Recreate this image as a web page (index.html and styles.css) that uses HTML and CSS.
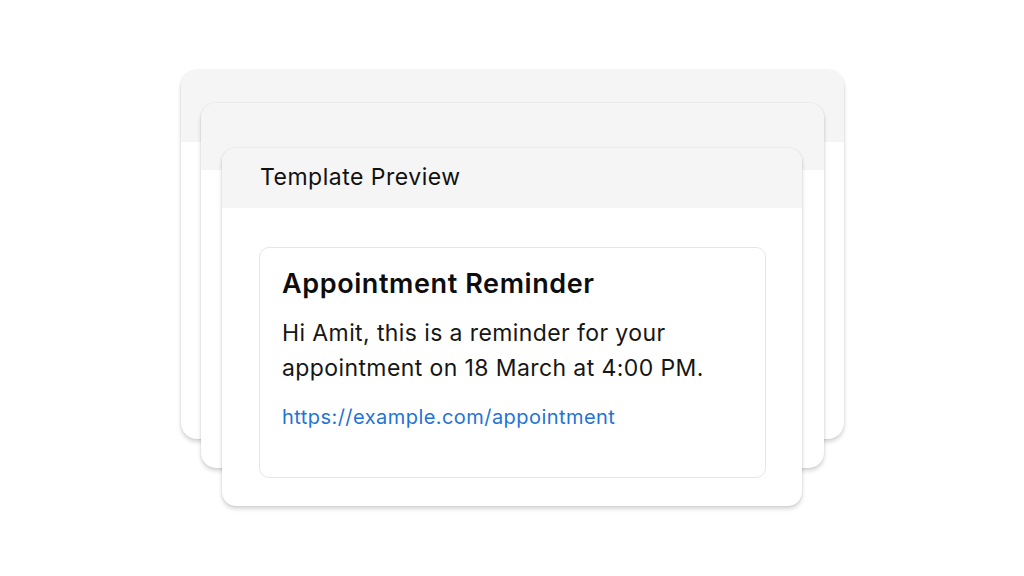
FILE: index.html
```html
<!DOCTYPE html>
<html lang="en">

<head>
    <meta charset="UTF-8">
    <title>Template Preview</title>
    <meta name="viewport" content="width=device-width, initial-scale=1.0">
    <link rel="stylesheet" href="styles.css">
</head>

<body>

    <div class="stack">
        <!-- two blank sheets behind the real preview -->
        <div class="sheet sheet-back">
            <div class="sheet-head"></div>
        </div>
        <div class="sheet sheet-middle">
            <div class="sheet-head"></div>
        </div>

        <div class="sheet sheet-front">
            <div class="sheet-head">Template Preview</div>
            <div class="sheet-body">
                <div class="message">
                    <h1>Appointment Reminder</h1>
                    <p>Hi Amit, this is a reminder for your appointment on 18 March at 4:00 PM.</p>
                    <a href="#">https://example.com/appointment</a>
                </div>
            </div>
        </div>
    </div>

</body>
</html>
```

FILE: styles.css
```css
* {
    box-sizing: border-box;
    margin: 0;
    padding: 0;
    font-family: 'Inter', 'Noto Sans', sans-serif;
}

html, body {
    width: 100%;
    height: 100%;
    background: #fff;
    color: #111;
    overflow: hidden;
}

.stack {
    display: grid;
    justify-items: center;
    align-items: start;
    padding-top: 70px;
}

.sheet {
    grid-area: 1 / 1;
    background: #fff;
    border-radius: 14px;
    overflow: hidden;
    box-shadow: 0 0 2px rgba(0, 0, 0, 0.12), 0 3px 4px rgba(0, 0, 0, 0.16);
}

.sheet-head {
    background: #f5f5f5;
}

.sheet-back {
    width: 663px;
    height: 369px;
    border-radius: 16px;
}

.sheet-back .sheet-head {
    height: 72px;
}

.sheet-middle {
    width: 623px;
    height: 365px;
    margin-top: 33px;
    border-radius: 15px;
}

.sheet-middle .sheet-head {
    height: 67px;
}

.sheet-front {
    width: 580px;
    height: 358px;
    margin-top: 78px;
}

.sheet-front .sheet-head {
    height: 60px;
    line-height: 58px;
    padding-left: 38px;
    font-size: 23px;
    letter-spacing: 0.5px;
    color: #111;
}

.sheet-body {
    padding: 39px 36px 0 37px;
}

.message {
    border: 1px solid #e6e6e6;
    border-radius: 10px;
    padding: 20px 22px 46px;
}

.message h1 {
    font-size: 27px;
    line-height: 32px;
    font-weight: 600;
    letter-spacing: 0.6px;
    color: #0d0d0d;
}

.message p {
    margin-top: 16px;
    font-size: 23px;
    line-height: 35px;
    letter-spacing: 0.4px;
    color: #161616;
}

.message a {
    display: block;
    margin-top: 17px;
    font-size: 20px;
    line-height: 28px;
    letter-spacing: 0.45px;
    color: #1f73d6;
    text-decoration: none;
}
```
